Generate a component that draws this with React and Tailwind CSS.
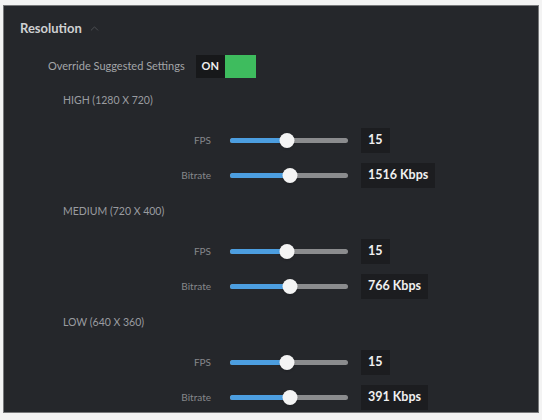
import React from 'react';
import { ChevronUp } from 'lucide-react';

const sections = [
  { title: 'HIGH (1280 X 720)', fps: 15, fpsPos: 48, bitrate: '1516 Kbps', bitPos: 51 },
  { title: 'MEDIUM (720 X 400)', fps: 15, fpsPos: 48, bitrate: '766 Kbps', bitPos: 51 },
  { title: 'LOW (640 X 360)', fps: 15, fpsPos: 48, bitrate: '391 Kbps', bitPos: 51 },
];

function Slider({ pos }) {
  return (
    <div className="relative ml-[19px] h-[15px] w-[118px] flex items-center">
      <div className="h-[5px] w-full rounded-full bg-[#8b8c8e]" />
      <div
        className="absolute left-0 h-[5px] rounded-full bg-[#4c9ee0]"
        style={{ width: `${pos}%` }}
      />
      <div
        className="absolute top-0 h-[15px] w-[15px] -translate-x-1/2 rounded-full bg-[#f4f4f4] shadow"
        style={{ left: `${pos}%` }}
      />
    </div>
  );
}

function Row({ label, pos, value }) {
  return (
    <div className="flex h-[35px] items-center">
      <span className="w-[207px] text-right text-[10px] text-[#85878b]">{label}</span>
      <Slider pos={pos} />
      <div className="ml-[13px] flex h-[25px] items-center bg-[#1c1d20] px-[7px] text-[12.5px] font-bold text-[#f0f0f0]">
        {value}
      </div>
    </div>
  );
}

export default function App() {
  return (
    <div className="h-[420px] w-[542px] bg-[#f3f3f3] pl-[3px] pt-[5px] font-['Lato',sans-serif]">
      <div className="h-[408px] w-[536px] overflow-hidden border border-[#77787a] bg-[#25272b]">
        {/* header */}
        <div className="flex h-[45px] items-center pl-[16px]">
          <span className="text-[13px] font-bold text-[#cfd0d2]">Resolution</span>
          <ChevronUp className="ml-[6px] text-[#55575b]" size={13} strokeWidth={1.5} />
        </div>

        {/* override toggle */}
        <div className="flex h-[31px] items-center pl-[44px]">
          <span className="text-[11px] text-[#a3a5a8]">Override Suggested Settings</span>
          <div className="ml-[11px] flex h-[23px]">
            <div className="flex w-[29px] items-center justify-center bg-[#17181a] text-[11px] font-bold text-[#f0f0f0]">
              ON
            </div>
            <div className="w-[31px] bg-[#3ebc5e]" />
          </div>
        </div>

        {sections.map((s) => (
          <div key={s.title}>
            <div className="h-[41px] pl-[59px] pt-[11px] text-[10.5px] leading-[14px] text-[#9a9ca0]">
              {s.title}
            </div>
            <Row label="FPS" pos={s.fpsPos} value={s.fps} />
            <Row label="Bitrate" pos={s.bitPos} value={s.bitrate} />
          </div>
        ))}
      </div>
    </div>
  );
}
